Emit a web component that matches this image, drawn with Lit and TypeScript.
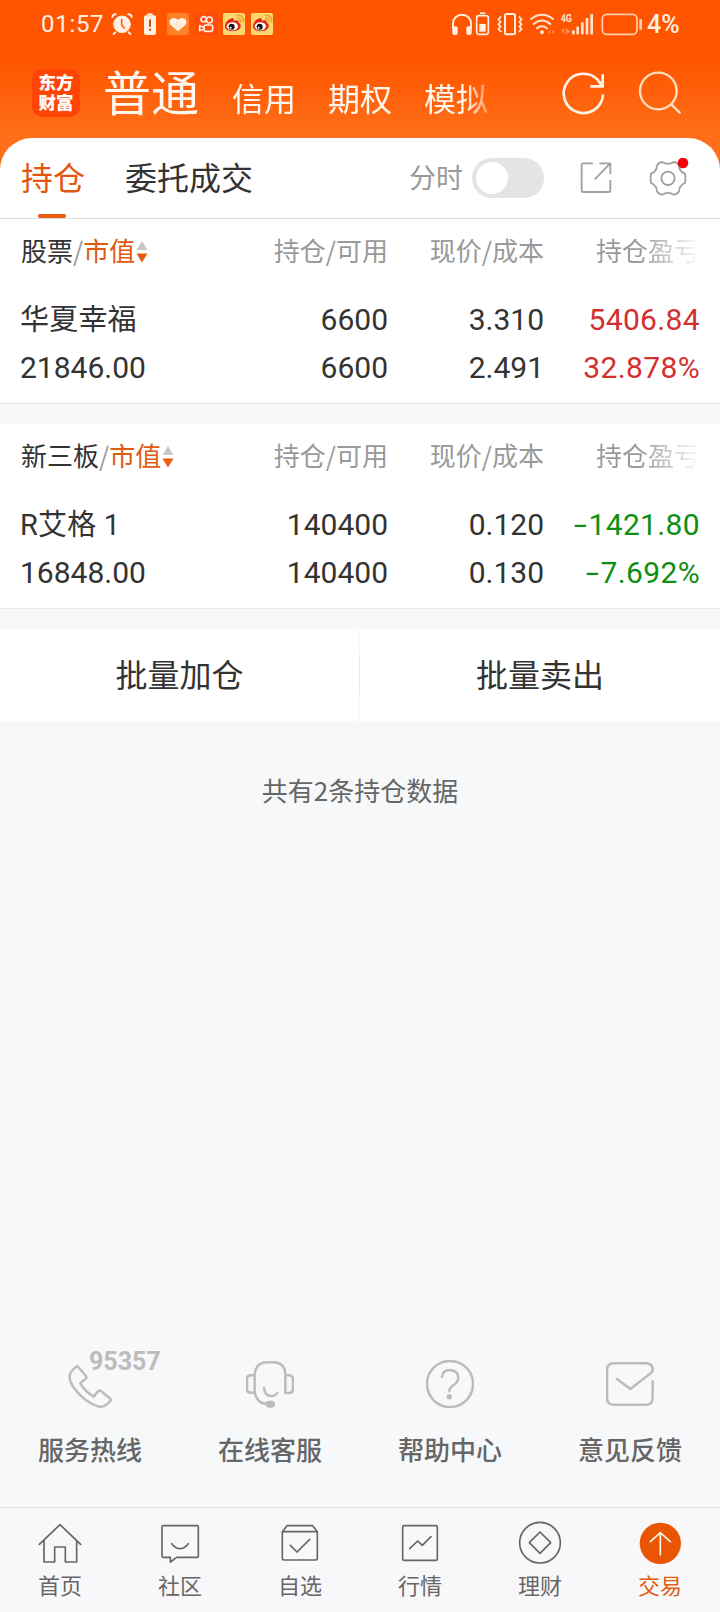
import { LitElement, html, svg, css } from "lit";
import { customElement, property } from "lit/decorators.js";

const icon = (viewBox: string, w: number, h: number, body: unknown) =>
  html`<svg viewBox=${viewBox} width=${w} height=${h} fill="none" stroke-linecap="round" stroke-linejoin="round">${body}</svg>`;

interface Holding {
  name: string;
  value: string;
  amount: string;
  available: string;
  price: string;
  cost: string;
  profit: string;
  rate: string;
}

const signed = (text: string) =>
  text.startsWith("-") ? html`<span class="sign">-</span>${text.slice(1)}` : text;

@customElement("holding-section")
class HoldingSection extends LitElement {
  @property() market = "";
  @property({ attribute: false }) rows: Holding[] = [];

  static styles = css`
    :host { display: block; height: 205px; box-sizing: border-box; }
    .panel { height: 184px; background: #fff; border-bottom: 1px solid #e6e8eb; }
    .grid { display: grid; grid-template-columns: 212px 156px 156px 156px; padding: 0 20px; text-align: right; }
    .head { height: 65px; line-height: 61px; font-size: 26px; color: #999; white-space: nowrap; }
    .first { text-align: left; display: flex; align-items: center; height: 61px; padding-left: 1px; }
    .market { color: #333; }
    .sort { color: #e05a12; }
    .arrows { display: block; margin: 5px 0 0 1px; }
    .fade { -webkit-mask-image: linear-gradient(90deg, #000 60%, rgba(0, 0, 0, 0.08) 98%); mask-image: linear-gradient(90deg, #000 60%, rgba(0, 0, 0, 0.08) 98%); }
    .row { padding-top: 12px; font: 400 30px/48px Roboto, "Noto Sans CJK SC", sans-serif; color: #333; }
    .cell { display: flex; flex-direction: column; height: 96px; }
    .line { height: 48px; line-height: 48px; white-space: nowrap; }
    .name { font-size: 29px; letter-spacing: 0.2px; }
    .left { text-align: left; }
    .up { color: #d23030; letter-spacing: 0.35px; }
    .down { color: #0f8f12; letter-spacing: 0.35px; }
    .sign { display: inline-block; transform: scaleX(1.6); transform-origin: 100% 50%; margin-right: 1px; }
  `;

  render() {
    return html`
      <div class="panel">
        <div class="grid head">
          <div class="first">
            <span class="market">${this.market}</span><span>/</span><span class="sort">市值</span>
            <svg class="arrows" width="12" height="24" viewBox="0 0 12 24"><path d="M0.5 10 6 1 11.500 10Z" fill="#c8c8c8" /><path d="M0.500 13.500H11.500L6 22.500Z" fill="#ea5a10" /></svg>
          </div>
          <div>持仓/可用</div>
          <div>现价/成本</div>
          <div class="fade">持仓盈亏</div>
        </div>
        ${this.rows.map((r) => {
          const tone = r.profit.startsWith("-") ? "down" : "up";
          return html`<div class="grid row">
            <div class="cell left"><span class="line name">${r.name}</span><span class="line">${r.value}</span></div>
            <div class="cell"><span class="line">${r.amount}</span><span class="line">${r.available}</span></div>
            <div class="cell"><span class="line">${r.price}</span><span class="line">${r.cost}</span></div>
            <div class="cell ${tone}"><span class="line">${signed(r.profit)}</span><span class="line">${signed(r.rate)}</span></div>
          </div>`;
        })}
      </div>
    `;
  }
}

const CREAM = "#fff0e2";

const weibo = svg`
  <rect x="9" y="6" width="66" height="66" rx="6" fill="#ffd76f"/>
  <path d="M15 46C15 33 28 22 37 22C43 22 42 28 41 30C50 26 58 28 56 35C64 38 64 48 58 54C48 64 15 64 15 46Z" fill="#e0251b"/>
  <ellipse cx="37" cy="46" rx="17" ry="12" fill="#fff"/>
  <circle cx="35" cy="47" r="9" fill="#151515"/>
  <circle cx="32" cy="50" r="3" fill="#fff"/>
  <path d="M53 22Q62 21 62 33M52 13Q72 12 71 33" stroke="#f2a02c" stroke-width="5"/>`;

const leftStatus = [
  svg`<g stroke=${CREAM}><circle cx="42" cy="40" r="25" fill=${CREAM} stroke-width="3"/><path d="M13 18Q14 10 23 10M61 10Q70 10 71 18M22 64L17 69M62 64L67 69" stroke-width="6"/><path d="M41 26V42L49 51" stroke="#f2632a" stroke-width="5"/></g>`,
  svg`<rect x="24" y="13" width="36" height="59" rx="6" fill=${CREAM}/><rect x="34" y="7" width="16" height="6" fill=${CREAM}/><path d="M42 28V45" stroke="#c8501c" stroke-width="6"/><circle cx="42" cy="56" r="3.500" fill="#c8501c"/>`,
  svg`<rect x="9" y="6" width="66" height="66" rx="10" fill="#ff8127"/><path d="M42 61L20 42C9 29 26 12 42 27C58 12 75 29 64 42Z" fill="#fff4e6"/><path d="M42 27L26 43L42 58L60 40Z" fill="#ffd9b4" opacity=".4"/>`,
  svg`<rect x="9" y="6" width="66" height="66" rx="4" fill="#ff4a0c"/><g stroke="#fff0e2" stroke-width="5"><circle cx="35" cy="25" r="8"/><circle cx="52" cy="27" r="9"/><rect x="36" y="42" width="26" height="19" rx="6"/><path d="M35 49L23 44V59L35 55"/></g>`,
  weibo,
  weibo,
];

const services = [
  { label: "服务热线", tag: "95357", box: "198 90 144 144", art: svg`<path d="M232 108L258 138Q261 142 257 146L241 160Q255 184 281 200L295 183Q299 180 303 183L331 206Q334 210 331 213Q316 232 296 230Q255 218 222 174Q205 150 210 133Q215 119 232 108Z"/>` },
  { label: "在线客服", tag: "", box: "738 90 144 144", art: svg`<path d="M764 188V135Q766 97 803 97H818Q856 97 856 135V189M764 136H752Q741 136 741 147V177Q741 188 752 188H764Q772 221 800 222M856 136H868Q879 137 879 148V177Q879 188 868 189H856M792 174Q795 198 813 198Q827 198 832 189"/><rect x="797" y="212" width="28" height="21" rx="10" fill="#bcbcbc" stroke="none"/>` },
  { label: "帮助中心", tag: "", box: "198 90 144 144", art: svg`<circle cx="270" cy="162" r="69"/><path d="M246 141Q248 120 270 120Q295 122 295 144Q294 156 281 165Q268 174 268 183"/><circle cx="268" cy="200" r="8" fill="#bcbcbc" stroke="none"/>` },
  { label: "意见反馈", tag: "", box: "738 90 144 144", art: svg`<path d="M878 154V203Q878 224 857 224H762Q741 224 741 203V121Q741 100 762 100H857Q873 100 878 114Q880 124 872 130L811 177L771 147"/>` },
];

const navItems = [
  { label: "首页", box: "111 570 138 138", art: svg`<path d="M118 643L180 584L242 643M132 633V696H164V651H196V696H230V633"/>` },
  { label: "社区", box: "471 570 138 138", art: svg`<path d="M489 587H592Q595 587 595 590V679Q595 682 592 682H530L511 696V682H489Q486 682 486 679V590Q486 587 489 587ZM515 641Q540 671 565 641"/>` },
  { label: "自选", box: "831 570 138 138", art: svg`<path d="M847 605V685Q847 690 852 690H947Q952 690 952 685V605L938 587H861ZM847 605H952M871 646L891 666L929 628"/>` },
  { label: "行情", box: "111 570 138 138", art: svg`<rect x="128" y="587" width="104" height="104" rx="4"/><path d="M149 656L173 633L187 646L213 620"/>` },
  { label: "理财", box: "471 570 138 138", art: svg`<circle cx="540" cy="638" r="61"/><path d="M540 606L572 638L540 670L508 638Z"/>` },
  { label: "交易", box: "831 570 138 138", active: true, art: svg`<circle cx="901" cy="640" r="62" fill="#ea5504" stroke="none"/><path d="M901 675V608M871 635L901 608L931 635" stroke="#fff3e6"/>` },
];

@customElement("app-root")
class AppRoot extends LitElement {
  static styles = css`
    :host { display: flex; flex-direction: column; width: 720px; height: 1612px; overflow: hidden; background: #f7f8fa; font-family: "Noto Sans CJK SC", sans-serif; color: #333; }
    svg { display: block; flex: none; }
    .top { height: 172px; margin-bottom: -34px; flex: none; background: linear-gradient(180deg, #ff5500 0, #ff5500 60px, #ff6e18 134px, #ff6e18 172px); }
    .status { display: grid; grid-template-columns: 450px 1fr; height: 50px; color: #fff0e2; font: 500 24px/49px Roboto, sans-serif; }
    .group { display: flex; align-items: flex-start; }
    .group svg { margin-top: 11px; }
    .clock { width: 67px; padding-left: 41px; font-weight: 400; letter-spacing: 0.7px; white-space: nowrap; }
    .percent { padding-left: 1px; font-size: 25px; }
    .bar { display: flex; height: 88px; align-items: flex-start; padding-left: 32px; color: #fff8f0; }
    .logo { width: 48px; height: 48px; margin-top: 19px; border-radius: 10px; background: #ff4405; color: #fff; box-sizing: border-box; padding-top: 3px; font-size: 17.5px; line-height: 20px; font-weight: 900; text-align: center; }
    .accounts { display: flex; align-items: baseline; gap: 32px; width: 388px; margin-left: 23px; overflow: hidden; white-space: nowrap; font-size: 32px; line-height: 80px; -webkit-mask-image: linear-gradient(90deg, #000 360px, rgba(0, 0, 0, 0.3) 388px); mask-image: linear-gradient(90deg, #000 360px, rgba(0, 0, 0, 0.3) 388px); }
    .accounts span { padding-top: 1px; }
    .accounts .current { font-size: 48px; margin-right: 1px; padding-top: 0; }
    .refresh { margin: 19px 0 0 69px; }
    .search { margin: 19px 0 0 30px; }
    .sheet { background: #fff; border-radius: 32px 32px 0 0; height: 81px; box-sizing: border-box; border-bottom: 1px solid #dcdcdc; flex: none; display: flex; align-items: center; padding: 0 30px 0 20px; font-size: 32px; }
    .tab { height: 80px; line-height: 77px; margin-right: 40px; white-space: nowrap; }
    .selected { color: #e3560f; display: flex; flex-direction: column; align-items: center; width: 64px; padding-left: 1px; }
    .selected span { height: 76px; }
    .mark { width: 28px; height: 4px; border-radius: 2px; background: #ea5a10; margin-right: 3px; }
    .tools { display: flex; align-items: center; margin-left: auto; color: #999; }
    .minute { font-size: 27px; line-height: 78px; height: 80px; }
    .switch { width: 72px; height: 40px; border-radius: 20px; background: #e4e4e7; margin: 0 35px 0 9px; padding: 4px; box-sizing: border-box; }
    .knob { width: 32px; height: 32px; border-radius: 50%; background: #fff; }
    .gear { margin-left: 35px; }
    .actions { display: grid; grid-template-columns: 359px 1px 360px; height: 92px; flex: none; background: #fff; text-align: center; font-size: 32px; line-height: 89px; }
    .rule { background: linear-gradient(180deg, #f7f8f9 28%, #e4e6e8 29%, #e4e6e8 71%, #f7f8f9 72%); }
    .count { text-align: center; color: #666; font-size: 26px; line-height: 40px; margin-top: 49px; }
    .services { margin-top: auto; height: 147px; display: grid; grid-template-columns: repeat(4, 1fr); flex: none; }
    .service { display: flex; flex-direction: column; align-items: center; position: relative; font-size: 26px; line-height: 40px; font-weight: 500; color: #666; }
    .service svg { stroke: #bcbcbc; stroke-width: 7.500; }
    .service span { margin-top: 21px; }
    .tag { position: absolute; left: 89px; top: -13px; font: 700 25px/30px Roboto, sans-serif; color: #bcbcbc; }
    .nav { display: grid; grid-template-columns: repeat(6, 1fr); height: 105px; flex: none; box-sizing: border-box; border-top: 1px solid #e0e1e4; background: #f8f8fa; }
    .item { display: flex; flex-direction: column; align-items: center; padding-top: 12px; font-size: 22px; line-height: 32px; color: #666; }
    .item svg { stroke: #666; stroke-width: 5; margin-bottom: 2px; }
    .active { color: #e35a10; }
  `;

  render() {
    return html`
      <div class="top">
        <div class="status">
          <div class="group">
            <span class="clock">01:57</span>
            ${leftStatus.map((s) => icon("0 0 84 78", 28, 26, s))}
          </div>
          <div class="group">
            ${icon("270 33 72 78", 24, 26, svg`<path d="M279 84V71A27 27 0 0 1 333 71V84" stroke=${CREAM} stroke-width="6"/><rect x="277" y="79" width="16" height="26" rx="6" fill=${CREAM}/><rect x="319" y="79" width="16" height="26" rx="6" fill=${CREAM}/>`)}
            ${icon("342 33 54 78", 18, 26, svg`<rect x="350" y="47" width="35" height="56" rx="7" stroke=${CREAM} stroke-width="5"/><rect x="360" y="37" width="15" height="5" fill=${CREAM}/><rect x="358" y="72" width="19" height="23" fill=${CREAM}/>`)}
            ${icon("396 33 108 78", 36, 26, svg`<g stroke=${CREAM}><rect x="435" y="42" width="30" height="61" rx="5" stroke-width="6"/><path d="M422 51L415 58L422 66L415 73L422 80L415 87L422 94M478 51L485 58L478 66L485 73L478 80L485 87L478 94" stroke-width="5"/></g>`)}
            ${icon("504 33 90 78", 30, 26, svg`<g stroke="#ffe3cc" stroke-width="6"><path d="M513 57Q546 32 579 57M521 72Q546 51 571 72M531 85Q546 73 561 85"/></g><circle cx="546" cy="97" r="6" fill="#ffe3cc"/><path d="M571 90V102L563 96ZM576 90V102L584 96Z" fill="#ff8a50"/>`)}
            ${icon("594 33 120 78", 40, 26, svg`<text x="602" y="67" font-family="Roboto" font-size="34" font-weight="700" textLength="34" lengthAdjust="spacingAndGlyphs" fill="#ffe3cc">4G</text><path d="M604 92L611 85V102M618 85V102L630 94" fill="#ff8a50" stroke="#ff8a50" stroke-width="3"/><g fill="#ffe3cc"><rect x="636" y="91" width="8" height="12"/><rect x="649" y="80" width="8" height="23"/><rect x="663" y="67" width="8" height="36"/><rect x="677" y="54" width="8" height="49"/><rect x="691" y="42" width="8" height="61"/></g>`)}
            ${icon("714 33 144 78", 48, 26, svg`<rect x="727" y="43" width="104" height="60" rx="13" stroke="#ffcfaa" stroke-width="5"/><rect x="735" y="52" width="5" height="42" rx="2" fill="#ff3c2a"/><rect x="838" y="57" width="8" height="33" rx="3" fill="#ffcfaa"/>`)}
            <span class="percent">4%</span>
          </div>
        </div>
        <div class="bar">
          <div class="logo">东方<br />财富</div>
          <div class="accounts"><span class="current">普通</span><span>信用</span><span>期权</span><span>模拟</span></div>
          <div class="refresh">${icon("600 207 144 144", 48, 48, svg`<path d="M729 283A59 59 0 1 1 715 242L726 257M691 259H728V223" stroke="#fff3e6" stroke-width="8" stroke-linecap="butt" stroke-linejoin="miter"/>`)}</div>
          <div class="search">${icon("834 207 144 144", 48, 48, svg`<g stroke="#ffdfc2" stroke-width="7"><circle cx="895" cy="273" r="55"/><path d="M934 313L959 338"/></g>`)}</div>
        </div>
      </div>
      <div class="sheet">
        <div class="tab selected"><span>持仓</span><div class="mark"></div></div>
        <div class="tab">委托成交</div>
        <div class="tools">
          <span class="minute">分时</span>
          <div class="switch"><div class="knob"></div></div>
          ${icon("657 94 102 102", 34, 34, svg`<path d="M699 101H670Q665 101 665 106V182Q665 187 670 187H746Q751 187 751 182V151M718 101H751V134M704 149L750 102" stroke="#a0a0a0" stroke-width="5.500" stroke-linecap="butt"/>`)}
          <div class="gear">${icon("864 84 126 120", 42, 40, svg`<g stroke="#a0a0a0" stroke-width="5.500"><path d="M907 96Q924 107 941 96Q952 97 957 106Q958 125 975 131Q978 145 975 159Q958 166 957 184Q952 193 941 194Q924 183 907 194Q896 193 891 184Q890 166 873 159Q870 145 873 131Q890 125 891 106Q896 97 907 96Z"/><circle cx="924" cy="145" r="20"/></g><circle cx="969" cy="99" r="16" fill="#f80008"/>`)}</div>
        </div>
      </div>
      <holding-section market="股票" .rows=${[{ name: "华夏幸福", value: "21846.00", amount: "6600", available: "6600", price: "3.310", cost: "2.491", profit: "5406.84", rate: "32.878%" }]}></holding-section>
      <holding-section market="新三板" .rows=${[{ name: "R艾格 1", value: "16848.00", amount: "140400", available: "140400", price: "0.120", cost: "0.130", profit: "-1421.80", rate: "-7.692%" }]}></holding-section>
      <div class="actions"><div>批量加仓</div><div class="rule"></div><div>批量卖出</div></div>
      <div class="count">共有2条持仓数据</div>
      <div class="services">
        ${services.map((s) => html`<div class="service">${icon(s.box, 48, 48, s.art)}${s.tag ? html`<div class="tag">${s.tag}</div>` : ""}<span>${s.label}</span></div>`)}
      </div>
      <div class="nav">
        ${navItems.map((n) => html`<div class="item ${n.active ? "active" : ""}">${icon(n.box, 46, 46, n.art)}<span>${n.label}</span></div>`)}
      </div>
    `;
  }
}
